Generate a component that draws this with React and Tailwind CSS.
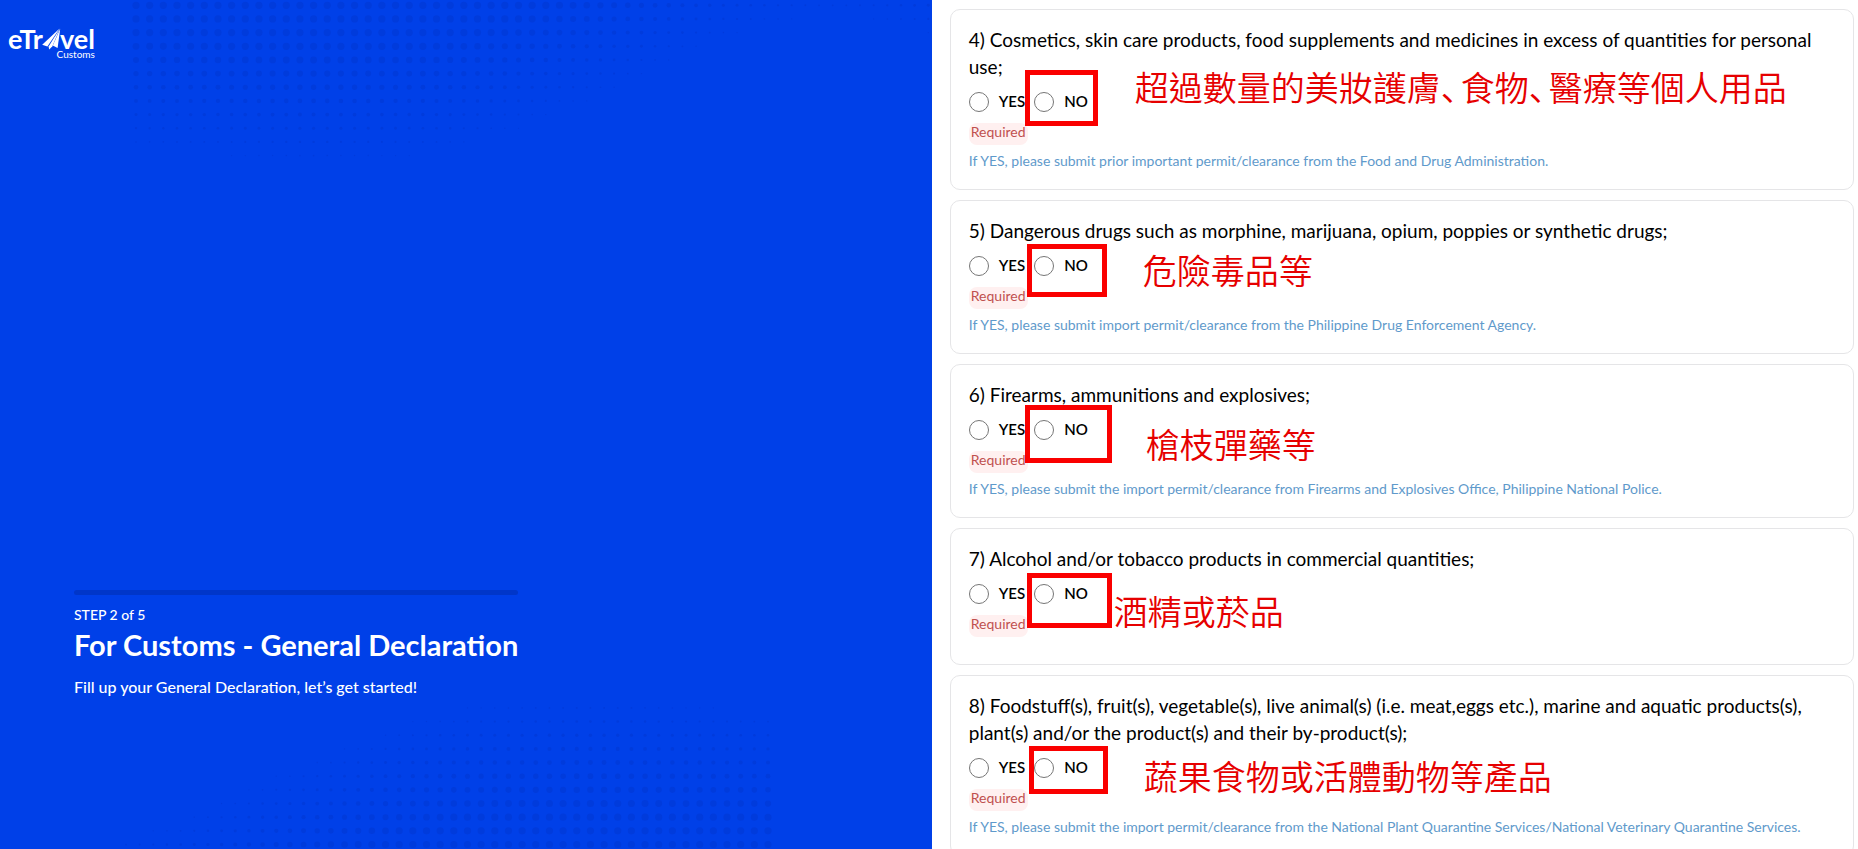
import React from 'react';

const questions = [
  {
    id: 4,
    text: 'Cosmetics, skin care products, food supplements and medicines in excess of quantities for personal use;',
    hint: 'If YES, please submit prior important permit/clearance from the Food and Drug Administration.',
    note: ['超過數量的美妝護膚', '食物', '醫療等個人用品'],
    boxClass: 'left-[74px] top-[60px] w-[73px] h-14',
    noteClass: 'left-[184px] top-[53px]',
  },
  {
    id: 5,
    text: 'Dangerous drugs such as morphine, marijuana, opium, poppies or synthetic drugs;',
    hint: 'If YES, please submit import permit/clearance from the Philippine Drug Enforcement Agency.',
    note: ['危險毒品等'],
    boxClass: 'left-[76px] top-[43px] w-20 h-[53px]',
    noteClass: 'left-[192px] top-[45px]',
  },
  {
    id: 6,
    text: 'Firearms, ammunitions and explosives;',
    hint: 'If YES, please submit the import permit/clearance from Firearms and Explosives Office, Philippine National Police.',
    note: ['槍枝彈藥等'],
    boxClass: 'left-[74px] top-10 w-[87px] h-[58px]',
    noteClass: 'left-[195px] top-[55px]',
  },
  {
    id: 7,
    text: 'Alcohol and/or tobacco products in commercial quantities;',
    hint: '',
    note: ['酒精或菸品'],
    boxClass: 'left-[76px] top-11 w-[85px] h-[55px]',
    noteClass: 'left-[163px] top-[58px]',
  },
  {
    id: 8,
    text: 'Foodstuff(s), fruit(s), vegetable(s), live animal(s) (i.e. meat,eggs etc.), marine and aquatic products(s), plant(s) and/or the product(s) and their by-product(s);',
    hint: 'If YES, please submit the import permit/clearance from the National Plant Quarantine Services/National Veterinary Quarantine Services.',
    note: ['蔬果食物或活體動物等產品'],
    boxClass: 'left-[78px] top-[70px] w-[79px] h-12',
    noteClass: 'left-[193px] top-[76px]',
  },
];

// lower edge of the halftone, as [x, y] points
const edge = [[130, 150], [310, 168], [430, 158], [503, 138], [600, 100], [684, 60], [722, 43], [770, 29], [818, 18], [870, 22], [940, 44]];

const edgeAt = (x) => {
  const i = Math.max(1, edge.findIndex(([ex]) => ex >= x));
  const [x0, y0] = edge[i - 1];
  const [x1, y1] = edge[i];
  return y0 + ((y1 - y0) * (x - x0)) / (x1 - x0);
};

const PITCH = 13.66;

const buildDots = (startX, startY, columns) => {
  const dots = [];
  for (let c = 0; c < columns; c++) {
    for (let r = 0; r < 12; r++) {
      const x = startX + c * PITCH;
      const y = startY + r * PITCH;
      const radius = Math.min(3.6, 0.5 + (edgeAt(x) - y) / 36);
      if (radius > 0.6) dots.push({ x, y, radius });
    }
  }
  return dots;
};

const Halftone = ({ dots, className, viewBox }) => (
  <svg className={className} viewBox={viewBox} fill="#003bdc" aria-hidden="true">
    {dots.map((dot, index) => (
      <circle key={index} cx={dot.x} cy={dot.y} r={dot.radius} />
    ))}
  </svg>
);

const topDots = buildDots(136, 5.3, 59);
const bottomDots = buildDots(136, 14.5, 48);

const Logo = () => (
  <a href="#" className="relative flex w-fit items-center text-[27px] leading-8 font-bold text-white" aria-label="eTravel Customs">
    <span>eTr</span>
    <svg className="-mx-px h-[22px] w-[19px]" viewBox="0 0 19 22" fill="currentColor" aria-hidden="true">
      <path d="M17.6 0.6 0.2 16.8 5.4 18.6Z" />
      <path d="M17.8 0.8 6.6 18.4 7.2 21.6 10.4 18.2Z" />
      <path d="M18.2 0.8 10.8 17.6 15.6 20Z" />
    </svg>
    <span>vel</span>
    <span className="absolute right-0 top-[25px] text-[10px] leading-3 font-normal">Customs</span>
  </a>
);

const RadioOption = ({ name, value }) => (
  <label className="flex items-center gap-2.5 text-[15px] font-semibold text-black">
    <input
      type="radio"
      name={name}
      value={value}
      className="size-5 shrink-0 appearance-none rounded-full border border-[#767676] bg-white checked:border-4 checked:border-[#0040e8]"
    />
    {value}
  </label>
);

const QuestionCard = ({ question }) => {
  const [first, ...rest] = question.note;

  return (
    <fieldset className="relative min-w-0 rounded-[10px] border border-[#e5e5e7] bg-white px-[18px] pt-4 pb-[18px]">
      <p className="text-[19px] leading-[27px] text-black">
        {question.id}) {question.text}
      </p>

      <div className="flex h-[43px] items-center gap-[9px]">
        <RadioOption name={`question-${question.id}`} value="YES" />
        <RadioOption name={`question-${question.id}`} value="NO" />
      </div>

      <p className="h-[22px] w-fit rounded-lg bg-[#fff0f0] px-0.5 text-sm leading-[18px] text-[#c0504f]">Required</p>

      <div className="mt-1.5 min-h-[3px] text-sm leading-5 text-[#5f9acb]">{question.hint}</div>

      <div className={`pointer-events-none absolute border-5 border-[#fa0000] ${question.boxClass}`} />
      <p
        lang="zh-Hant"
        className={`pointer-events-none absolute whitespace-nowrap font-['Noto_Sans_CJK_TC',sans-serif] text-[34px] leading-12 font-[350] text-[#e60000] ${question.noteClass}`}
      >
        {first}
        {rest.map((part) => (
          <React.Fragment key={part}>
            <span lang="ja" className="inline-block w-5 font-['Noto_Sans_CJK_JP',sans-serif]">、</span>
            {part}
          </React.Fragment>
        ))}
      </p>
    </fieldset>
  );
};

const App = () => {
  return (
    <div className="flex h-screen overflow-hidden bg-white font-['Lato','Noto_Sans_CJK_TC',sans-serif]">
      <aside className="relative flex w-[50.15%] shrink-0 flex-col overflow-hidden bg-[#0040e8] px-2 pt-[23px]">
        <Halftone dots={topDots} className="absolute left-0 top-0 h-[180px] w-[940px]" viewBox="0 0 940 180" />
        <Halftone dots={bottomDots} className="absolute bottom-0 left-0 h-[180px] w-[904px] rotate-180" viewBox="0 10 904 180" />

        <Logo />

        <div className="relative mt-auto mb-[150px] ml-[66px] w-fit text-white">
          <div className="h-[5px] rounded-sm bg-[#0036c9]" />
          <p className="mt-2.5 text-sm leading-5 font-medium">STEP 2 of 5</p>
          <h1 className="text-[29px] leading-10 font-bold">For Customs - General Declaration</h1>
          <p className="mt-2.5 text-base leading-6 font-medium">Fill up your General Declaration, let’s get started!</p>
        </div>
      </aside>

      <main className="flex min-w-0 grow flex-col gap-2.5 pt-[9px] pr-1 pl-[18px]">
        {questions.map((question) => (
          <QuestionCard key={question.id} question={question} />
        ))}
      </main>
    </div>
  );
};

export default App;
